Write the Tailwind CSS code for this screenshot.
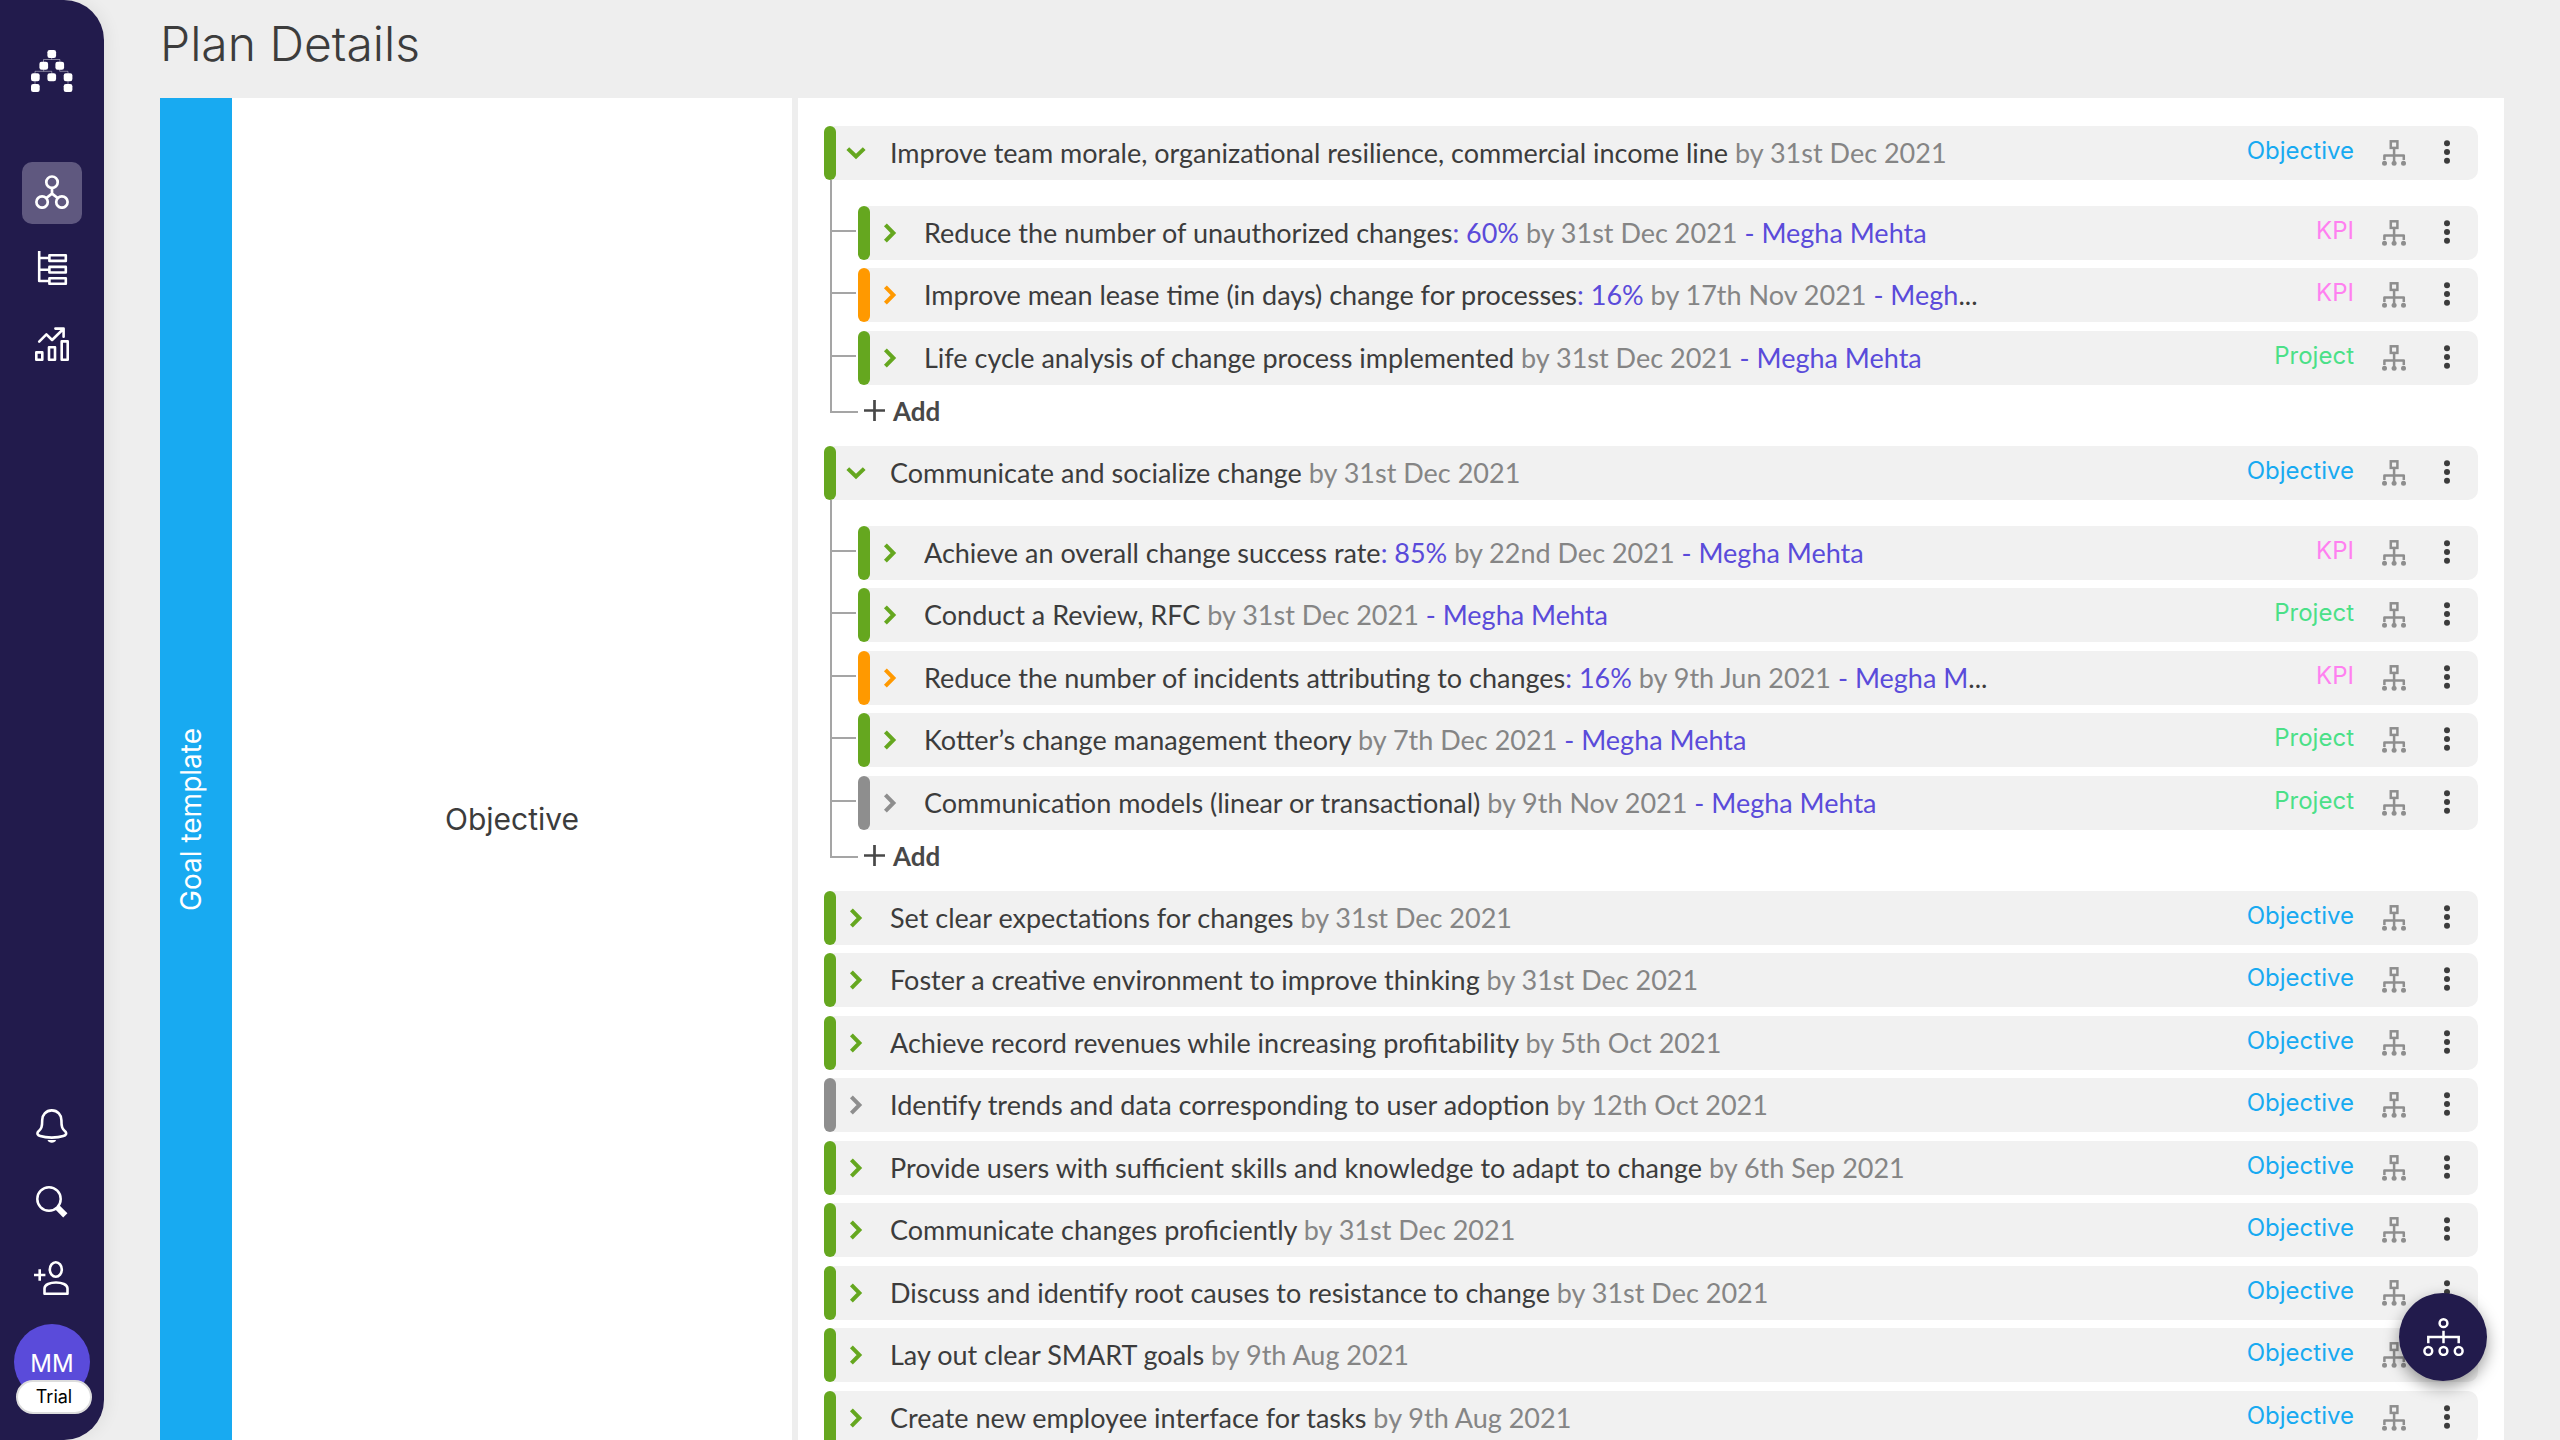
<!DOCTYPE html>
<html lang="en">
<head>
<meta charset="utf-8">
<meta name="viewport" content="width=device-width, initial-scale=1">
<title>Plan Details</title>
<script src="https://cdn.jsdelivr.net/npm/@tailwindcss/browser@4"></script>
</head>
<body class="flex h-screen overflow-hidden bg-[#eeeeee] font-['Inter',sans-serif] text-[#3c3c3c]">

<svg class="hidden" aria-hidden="true">
  <symbol id="org" viewBox="0 0 24 26">
    <g fill="none" stroke="currentColor" stroke-width="2.5">
      <rect x="8.8" y="1.3" width="6.6" height="6.6"/>
      <path d="M12.1 9v12M2.4 20v-4.4h19.4V20" stroke-linejoin="round"/>
    </g>
    <g fill="currentColor"><circle cx="2.5" cy="23.3" r="2.5"/><circle cx="12.1" cy="23.3" r="2.5"/><circle cx="21.5" cy="23.3" r="2.5"/></g>
  </symbol>
  <symbol id="dots" viewBox="0 0 6 24"><g fill="currentColor"><circle cx="3" cy="3.2" r="3"/><circle cx="3" cy="12" r="3"/><circle cx="3" cy="20.8" r="3"/></g></symbol>
  <symbol id="chev-right" viewBox="0 0 20 20"><path d="M5.4 1.8 13.4 10l-8 8.2" fill="none" stroke="currentColor" stroke-width="4"/></symbol>
  <symbol id="chev-down" viewBox="0 0 20 20"><path d="M1.8 5.6 10 13.4l8.2-7.8" fill="none" stroke="currentColor" stroke-width="4"/></symbol>
</svg>

<aside class="flex w-[104px] shrink-0 flex-col items-center justify-between rounded-r-[40px] bg-[#221b4c] pt-[50px] pb-10 text-white shadow-[4px_0_16px_rgba(0,0,0,0.06)]">
  <div class="flex flex-col items-center gap-[70px]">
    <a href="#" aria-label="Home">
      <svg class="size-[42px]" viewBox="0 0 42 42">
        <path d="M20.7 8v1.5M12.5 12V9.5h16.4V12M12.7 19v2.3M4 24v-2.7h16.8V24M28.7 19v2.3H37V24M4 30v5M37 30v5" fill="none" stroke="#fff" stroke-opacity=".55" stroke-width=".8"/>
        <g fill="#fff">
          <rect x="16.4" y="0" width="8.7" height="8" rx="2.2"/>
          <rect x="8.4" y="11.7" width="8.7" height="8" rx="2.2"/><rect x="24.4" y="11.7" width="8.7" height="8" rx="2.2"/>
          <rect x="0" y="23.3" width="8.7" height="8" rx="2.2"/><rect x="16.4" y="23.3" width="8.7" height="8" rx="2.2"/><rect x="32.7" y="23.3" width="8.7" height="8" rx="2.2"/>
          <rect x="0" y="34" width="8.7" height="8" rx="2.2"/><rect x="32.7" y="34" width="8.7" height="8" rx="2.2"/>
        </g>
      </svg>
    </a>
    <nav class="flex flex-col gap-3.5">
      <a href="#" aria-label="Plans" aria-current="page" class="flex h-[62px] w-[60px] items-center justify-center rounded-[10px] bg-[#5f587f] pb-0.5">
        <svg class="size-[34px]" viewBox="0 0 34 34" fill="none" stroke="currentColor" stroke-width="2.7"><circle cx="17" cy="7.2" r="5.7"/><circle cx="7.1" cy="27" r="5.7"/><circle cx="26.9" cy="27" r="5.7"/><path d="M17 13v5.6l-5.3 4.2M17 18.6l5.3 4.2"/></svg>
      </a>
      <a href="#" aria-label="Hierarchy" class="flex h-[62px] w-[60px] items-center justify-center pb-0.5">
        <svg class="size-[34px]" viewBox="0 0 34 34" fill="none" stroke="currentColor" stroke-width="2.6" stroke-linejoin="round"><path d="M4.2 0v30H14M4.2 7H14M4.2 18.7H14"/><rect x="14.4" y="4.3" width="16.4" height="5.6"/><rect x="14.4" y="15.9" width="16.4" height="5.6"/><rect x="14.4" y="27.2" width="16.4" height="5.6"/></svg>
      </a>
      <a href="#" aria-label="Reports" class="flex h-[62px] w-[60px] items-center justify-center pb-0.5">
        <svg class="size-[34px]" viewBox="0 0 34 34" fill="none" stroke="currentColor" stroke-width="2.6" stroke-linejoin="round"><rect x="1.3" y="25.4" width="6" height="7.3"/><rect x="14" y="20.2" width="6" height="12.5"/><rect x="26.7" y="14.4" width="6" height="18.3"/><path d="m4.2 14.6 7.2-7.2 5.7 5.6L28.3 2M20.4 1.6h8.2v8.2" stroke-linecap="round"/></svg>
      </a>
    </nav>
  </div>
  <div class="flex flex-col items-center gap-[15px]">
    <div class="flex flex-col gap-3.5">
      <button type="button" aria-label="Notifications" class="flex h-[62px] w-[60px] items-center justify-center">
        <svg class="h-[34px] w-8" viewBox="0 0 32 34"><path d="M15.8 1.4C9.8 1.4 6.2 6 6.2 11c0 8-1 8.5-4 11.6-1.6 2.2-.4 3.8 2.1 4.5 6 2 17 2 23 0 2.5-.7 3.7-2.3 2.1-4.5-3-3.1-4-3.6-4-11.6 0-5-3.6-9.6-9.6-9.6Z" fill="none" stroke="currentColor" stroke-width="2.6"/><path d="M11.5 31h8.6c-1 3.7-7.6 3.7-8.6 0Z" fill="currentColor"/></svg>
      </button>
      <button type="button" aria-label="Search" class="flex h-[62px] w-[60px] items-center justify-center">
        <svg class="size-8" viewBox="0 0 32 32" fill="none" stroke="currentColor"><circle cx="13" cy="13" r="11.7" stroke-width="2.5"/><path d="m21 21 8.3 8.3" stroke-width="6"/></svg>
      </button>
      <button type="button" aria-label="Invite person" class="flex h-[62px] w-[60px] items-center justify-center">
        <svg class="h-[34px] w-9" viewBox="0 0 36 34" fill="none" stroke="currentColor" stroke-width="2.6"><ellipse cx="21.8" cy="8.5" rx="6" ry="7.2"/><path d="M10.5 32.7h23v-5.2c0-8-23-8-23 0ZM0 14h11.400M5.700 8.300v11.400" stroke-linejoin="round"/></svg>
      </button>
    </div>
    <div class="relative">
      <button type="button" aria-label="Account" class="size-[76px] rounded-full bg-[#5a4bda] pt-1 text-2xl">MM</button>
      <span class="absolute top-14 left-0.5 flex h-[34px] w-[76px] items-center justify-center rounded-full border-2 border-[#dddddd] bg-white pb-0.5 text-[18px] text-black">Trial</span>
    </div>
  </div>
</aside>

<main class="min-w-0 flex-1 overflow-y-auto px-14 [scrollbar-width:none]">
  <h1 class="flex h-[98px] items-center pb-2.5 text-5xl font-light">Plan Details</h1>
  <section class="grid grid-cols-[72px_560px_minmax(0,1fr)] bg-white">
    <div class="flex items-center justify-center bg-[#18aaf1] pr-2.5">
      <span class="rotate-180 text-[28px] text-white [writing-mode:vertical-rl]">Goal template</span>
    </div>
    <h2 class="flex items-center justify-center text-[30px]">Objective</h2>
    <ul id="plan" class="border-l-[6px] border-[#eeeeee] px-[26px] pt-7 pb-24"></ul>
  </section>
</main>

<button type="button" aria-label="Open chart" class="fixed right-[73px] bottom-[59px] flex size-[88px] items-center justify-center rounded-full bg-[#221b4c] text-white shadow-[0_6px_16px_rgba(0,0,0,0.4)]">
  <svg class="h-[38px] w-[41px]" viewBox="0 0 41 38" fill="none" stroke="currentColor" stroke-width="2.5"><circle cx="20.5" cy="5.2" r="3.9"/><circle cx="5.3" cy="33" r="3.9"/><circle cx="20.5" cy="33" r="3.9"/><circle cx="35.7" cy="33" r="3.9"/><path d="M20.5 12.7v12.6M5.3 25.3V19h30.4v6.3"/></svg>
</button>

<script>
const status = {
  green: { bar: 'bg-[#65a71f]', chevron: 'text-[#65a71f]' },
  orange: { bar: 'bg-[#ff9900]', chevron: 'text-[#ff9900]' },
  grey: { bar: 'bg-[#8e8e8e]', chevron: 'text-[#8e8e8e]' },
};
const kinds = { Objective: 'text-[#18aaf1]', KPI: 'text-[#ff80f0]', Project: 'text-[#4be088]' };
const me = 'Megha Mehta';

const plan = [
  { title: 'Improve team morale, organizational resilience, commercial income line', due: '31st Dec 2021', items: [
    { title: 'Reduce the number of unauthorized changes', value: '60%', due: '31st Dec 2021', owner: me, kind: 'KPI' },
    { title: 'Improve mean lease time (in days) change for processes', value: '16%', due: '17th Nov 2021', owner: 'Megh', more: true, kind: 'KPI', state: 'orange' },
    { title: 'Life cycle analysis of change process implemented', due: '31st Dec 2021', owner: me, kind: 'Project' },
  ] },
  { title: 'Communicate and socialize change', due: '31st Dec 2021', items: [
    { title: 'Achieve an overall change success rate', value: '85%', due: '22nd Dec 2021', owner: me, kind: 'KPI' },
    { title: 'Conduct a Review, RFC', due: '31st Dec 2021', owner: me, kind: 'Project' },
    { title: 'Reduce the number of incidents attributing to changes', value: '16%', due: '9th Jun 2021', owner: 'Megha M', more: true, kind: 'KPI', state: 'orange' },
    { title: 'Kotter’s change management theory', due: '7th Dec 2021', owner: me, kind: 'Project' },
    { title: 'Communication models (linear or transactional)', due: '9th Nov 2021', owner: me, kind: 'Project', state: 'grey' },
  ] },
  { title: 'Set clear expectations for changes', due: '31st Dec 2021' },
  { title: 'Foster a creative environment to improve thinking', due: '31st Dec 2021' },
  { title: 'Achieve record revenues while increasing profitability', due: '5th Oct 2021' },
  { title: 'Identify trends and data corresponding to user adoption', due: '12th Oct 2021', state: 'grey' },
  { title: 'Provide users with sufficient skills and knowledge to adapt to change', due: '6th Sep 2021' },
  { title: 'Communicate changes proficiently', due: '31st Dec 2021' },
  { title: 'Discuss and identify root causes to resistance to change', due: '31st Dec 2021' },
  { title: 'Lay out clear SMART goals', due: '9th Aug 2021' },
  { title: 'Create new employee interface for tasks', due: '9th Aug 2021' },
];

function row(g) {
  const s = status[g.state || 'green'];
  const kind = g.kind || 'Objective';
  return `
  <div class="flex h-[54px] items-center rounded-[10px] bg-[#f1f1f1] pr-7">
    <span class="h-full w-3 shrink-0 rounded-full ${s.bar}"></span>
    <button type="button" aria-label="${g.items ? 'Collapse' : 'Expand'}" class="mr-6 ml-2.5 shrink-0 ${s.chevron}"><svg class="size-5"><use href="#${g.items ? 'chev-down' : 'chev-right'}"/></svg></button>
    <p class="min-w-0 flex-1 truncate pb-px font-['Lato',sans-serif] text-[27px] leading-9">${g.title}${g.value ? `<span class="text-[#5a4bda]">: ${g.value}</span>` : ''} <span class="text-[#858585]">by ${g.due}</span>${g.owner ? ` <span class="text-[#5a4bda]">- ${g.owner}</span>` : ''}${g.more ? '...' : ''}</p>
    <span class="shrink-0 pb-1 text-2xl ${kinds[kind]}">${kind}</span>
    <button type="button" aria-label="Show in chart" class="ml-7 shrink-0 text-[#8e8e8e]"><svg class="h-[26px] w-6"><use href="#org"/></svg></button>
    <button type="button" aria-label="More actions" class="ml-[38px] shrink-0 pb-[3px] text-[#3c3c3c]"><svg class="h-6 w-1.5"><use href="#dots"/></svg></button>
  </div>`;
}

function branch(items) {
  return `
  <div class="relative pt-[26px] pl-[34px]">
    <span class="absolute top-0 bottom-[34px] left-1.5 w-0.5 bg-[#a5a5a5]"></span>
    <ul>${items.map(g => `<li class="relative not-last:odd:mb-2 not-last:even:mb-[9px]"><span class="absolute top-6 -left-[26px] h-0.5 w-6 bg-[#a5a5a5]"></span>${row(g)}</li>`).join('')}</ul>
    <div class="relative flex h-[61px] items-center pb-2.5">
      <span class="absolute top-[26px] -left-7 h-0.5 w-7 bg-[#a5a5a5]"></span>
      <button type="button" class="flex items-center gap-2 pl-1.5 font-['Lato',sans-serif] text-[26px] leading-9 font-bold text-[#484848]"><svg class="size-[21px]" viewBox="0 0 21 21"><path d="M10.5 0v21M0 10.5h21" stroke="currentColor" stroke-width="2.7"/></svg>Add</button>
    </div>
  </div>`;
}

document.getElementById('plan').innerHTML = plan.map(g =>
  g.items ? `<li>${row(g)}${branch(g.items)}</li>` : `<li class="not-last:odd:mb-2 not-last:even:mb-[9px]">${row(g)}</li>`
).join('');
</script>
</body>
</html>
